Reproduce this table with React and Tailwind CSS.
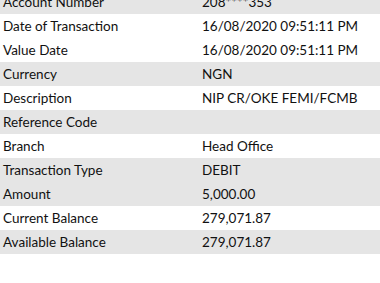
import React from 'react';

// Transaction detail rows
const rows = [
  { label: 'Account Number', value: '208****353', shade: true },
  { label: 'Date of Transaction', value: '16/08/2020 09:51:11 PM' },
  { label: 'Value Date', value: '16/08/2020 09:51:11 PM' },
  { label: 'Currency', value: 'NGN', shade: true },
  { label: 'Description', value: 'NIP CR/OKE FEMI/FCMB' },
  { label: 'Reference Code', value: '', shade: true },
  { label: 'Branch', value: 'Head Office' },
  { label: 'Transaction Type', value: 'DEBIT', shade: true },
  { label: 'Amount', value: '5,000.00', shade: true },
  { label: 'Current Balance', value: '279,071.87' },
  { label: 'Available Balance', value: '279,071.87', shade: true },
];

const App = () => {
  return (
    <div className="w-[380px] h-[283px] bg-white overflow-hidden text-[#111] font-['Lato',sans-serif] text-[13.5px]">
      <div className="-mt-[10px] flex flex-col">
        {rows.map((r) => (
          <div
            key={r.label}
            className={`flex items-center h-[24px] ${r.shade ? 'bg-[#e5e5e5]' : 'bg-white'}`}
          >
            <div className="w-[202px] pl-[3px] shrink-0">{r.label}</div>
            <div>{r.value}</div>
          </div>
        ))}
      </div>
    </div>
  );
};

export default App;
